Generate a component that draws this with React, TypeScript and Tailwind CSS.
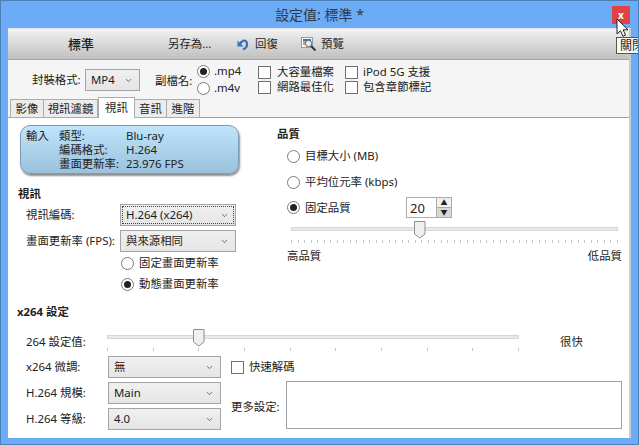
import type { ReactNode } from "react";
import { ChevronDown } from "lucide-react";

const cjk = "font-['Noto_Sans','Noto_Sans_CJK_TC',sans-serif]";

function Select({ value, w, h = "h-[22px]", focus = false, className = "" }: { value: string; w: string; h?: string; focus?: boolean; className?: string }) {
  return (
    <div className={`${w} ${h} ${className} relative flex shrink-0 items-center justify-between border border-[#a4a4a4] bg-gradient-to-b from-[#f0f0f0] to-[#e5e5e5] pl-[5px] pr-[6px] text-[#1c1c1c]`}>
      {focus && <div className="absolute inset-[1px] border border-dotted border-[#444]" />}
      <span>{value}</span>
      <ChevronDown size={9} strokeWidth={2} className="text-[#444]" />
    </div>
  );
}

function Radio({ checked = false }: { checked?: boolean }) {
  return (
    <span className="flex h-[13px] w-[13px] shrink-0 items-center justify-center rounded-full border border-[#7a7a7a] bg-white">
      {checked && <span className="h-[7px] w-[7px] rounded-full bg-[#222]" />}
    </span>
  );
}

function Check() {
  return <span className="block h-[13px] w-[13px] shrink-0 border border-[#707070] bg-white" />;
}

function Slider({ w, thumb, ticks }: { w: string; thumb: string; ticks: number }) {
  return (
    <div className={`${w} relative h-[24px]`}>
      <div className="absolute inset-x-0 top-[6px] h-[4px] border border-[#d6d6d6] bg-[#e7eae9]" />
      <svg className={`absolute top-0 ${thumb}`} width="12" height="18" viewBox="0 0 12 18">
        <path d="M.5.5h10.5v12.5l-5.25 4-5.25-4z" fill="#f0f0f0" stroke="#8e8f8f" />
      </svg>
      <div className="absolute inset-x-0 top-[19px] flex justify-between">
        {Array.from({ length: ticks }).map((_, i) => (
          <span key={i} className="block h-[3px] w-px bg-[#c4c4c4]" />
        ))}
      </div>
    </div>
  );
}

function Row({ children, className = "" }: { children: ReactNode; className?: string }) {
  return <div className={`flex items-center ${className}`}>{children}</div>;
}

export default function App() {
  const tabs = ["影像", "視訊濾鏡", "視訊", "音訊", "進階"];
  const widths = ["w-[34px]", "w-[55px]", "w-[37px]", "w-[33px]", "w-[34px]"];

  return (
    <div className={`${cjk} relative flex h-[445px] w-[639px] flex-col overflow-hidden border border-[#4a7fb8] bg-[#6cabf6] text-[11.4px] leading-[14px] text-[#222]`}>

      {/* title bar */}
      <div className="flex h-[27px] shrink-0 items-center justify-center pt-[1px] text-[14px] text-[#2f3a45]">
        設定值: 標準 *
      </div>

      {/* close button and tooltip */}
      <div className="absolute right-[8px] top-[5px] flex h-[18px] w-[18px] items-center justify-center bg-[#e04343] text-[10px] font-bold leading-none text-white">
        x
      </div>
      <div className="absolute left-[615px] top-[36px] z-10 h-[17px] w-[40px] border border-[#555] bg-[#fbfbf4] pl-[3px] pt-[1px] text-[12px] leading-[14px]">
        關閉
      </div>
      <svg className="absolute left-[615px] top-[17px] z-20" width="14" height="20" viewBox="0 0 14 20">
        <path d="M1 1v15l3.5-3.2 2.4 5.4 2.6-1.1-2.4-5.3H12z" fill="#fff" stroke="#222" />
      </svg>

      <div className="mx-[7px] flex min-h-0 flex-1 flex-col border-t border-[#dfe6ee] border-r-2 border-r-[#c8ccd0] bg-white">

        {/* toolbar */}
        <div className="flex h-[31px] shrink-0 items-center border-b border-[#a4a4a4] bg-gradient-to-b from-[#f2f2f2] to-[#c0c0c0] pl-[60px] text-[#1e1e1e]">
          <span className="w-[26px] text-[13px] font-medium">標準</span>
          <span className="ml-[74px] w-[69px]">另存為...</span>
          <svg width="12" height="13" viewBox="0 0 12 13">
            <path d="M3 6.5C3.5 3.8 9-.2 10 5.5c.4 3-2 5.2-4 6" fill="none" stroke="#2f71c9" strokeWidth="2.2" />
            <path d="M.5 2.5v6h6z" fill="#2f71c9" />
          </svg>
          <span className="ml-[6px] w-[46px]">回復</span>
          <svg width="16" height="16" viewBox="0 0 16 16">
            <rect x=".5" y="1.5" width="11" height="10" fill="#f5f8fc" stroke="#8aa0b8" />
            <rect x="2" y="3" width="8" height="2" fill="#3a78c8" />
            <rect x="2" y="5" width="3" height="4" fill="#e0a060" />
            <circle cx="7.5" cy="7.5" r="3.2" fill="#e6f0fa" stroke="#56616c" />
            <path d="M10 10l4.5 4.5" stroke="#333" strokeWidth="2" />
          </svg>
          <span className="ml-[4px]">預覽</span>
        </div>

        {/* container options */}
        <div className="relative flex h-[58px] shrink-0 items-start border-b border-[#9e9e9e] bg-[#f5f5f5] pl-[24px]">
          <Row className="mt-[9px]">
            <span className="w-[53px]">封裝格式:</span>
            <Select value="MP4" w="w-[55px]" />
          </Row>
          <Row className="ml-[15px] mt-[14px]">
            <span className="w-[42px]">副檔名:</span>
          </Row>
          <div className="mt-[4px] flex w-[45px] flex-col gap-[3px]">
            <Row className="gap-[4px]"><Radio checked /><span>.mp4</span></Row>
            <Row className="gap-[4px]"><Radio /><span>.m4v</span></Row>
          </div>
          <div className="ml-[16px] mt-[5px] flex flex-col gap-[1px]">
            <Row className="gap-[6px]"><Check /><span>大容量檔案</span></Row>
            <Row className="gap-[6px]"><Check /><span>網路最佳化</span></Row>
          </div>
          <div className="ml-[11px] mt-[5px] flex flex-col gap-[1px]">
            <Row className="gap-[5px]"><Check /><span>iPod 5G 支援</span></Row>
            <Row className="gap-[5px]"><Check /><span>包含章節標記</span></Row>
          </div>

          {/* tabs */}
          <div className="absolute bottom-[-2px] left-[2px] flex items-end">
            {tabs.map((t, i) => (
              <div
                key={t}
                className={`${widths[i]} flex items-center justify-center border border-[#acacac] ${i === 2 ? "z-10 h-[21px] border-b-0 bg-white" : "-ml-px h-[19px] bg-[#ececec] first:ml-0"} mb-[1px]`}
              >
                {t}
              </div>
            ))}
          </div>
        </div>

        {/* video and quality */}
        <div className="flex h-[187px] shrink-0">
          <div className="w-[269px] shrink-0 pl-[12px] pt-[7px]">
            <div className="grid h-[49px] w-[219px] grid-cols-[33px_67px_1fr] content-center rounded-[10px] border border-[#7f9db2] bg-gradient-to-b from-[#bfe4fb] to-[#9bc2dc] pl-[5px] shadow-[1px_2px_2px_rgba(0,0,0,0.45)]">
              <span>輸入</span><span>類型:</span><span>Blu-ray</span>
              <span /><span>編碼格式:</span><span>H.264</span>
              <span /><span>畫面更新率:</span><span>23.976 FPS</span>
            </div>
            <div className="-ml-[2px] mt-[13px] font-bold">視訊</div>
            <Row className="mt-[3px] pl-[6px]">
              <span className="w-[94px]">視訊編碼:</span>
              <Select value="H.264 (x264)" w="w-[116px]" focus />
            </Row>
            <Row className="mt-[4px] pl-[6px]">
              <span className="w-[94px]">畫面更新率 (FPS):</span>
              <Select value="與來源相同" w="w-[116px]" />
            </Row>
            <Row className="mt-[4px] gap-[5px] pl-[101px]"><Radio /><span>固定畫面更新率</span></Row>
            <Row className="mt-[7px] gap-[5px] pl-[101px]"><Radio checked /><span>動態畫面更新率</span></Row>
          </div>

          <div className="min-w-0 flex-1 pt-[9px]">
            <div className="font-bold">品質</div>
            <Row className="ml-[10px] mt-[8px] gap-[5px]"><Radio /><span>目標大小 (MB)</span></Row>
            <Row className="ml-[10px] mt-[12px] gap-[5px]"><Radio /><span>平均位元率 (kbps)</span></Row>
            <Row className="ml-[10px] mt-[8px] h-[21px]">
              <Radio checked />
              <span className="ml-[5px] w-[101px]">固定品質</span>
              <div className="flex h-[21px] w-[31px] items-center border border-[#acacac] bg-white pl-[3px] text-[13px]">20</div>
              <div className="flex h-[21px] w-[15px] flex-col border border-l-0 border-[#acacac]">
                <span className="flex flex-1 items-center justify-center border-b border-[#acacac] bg-[#f0f0f0] text-[7px] leading-none">▲</span>
                <span className="flex flex-1 items-center justify-center bg-[#d8d8d8] text-[7px] leading-none">▼</span>
              </div>
            </Row>
            <Slider w="ml-[14px] mt-[3px] w-[327px]" thumb="left-[123px]" ticks={51} />
            <div className="ml-[10px] mt-[4px] flex w-[335px] justify-between">
              <span>高品質</span>
              <span>低品質</span>
            </div>
          </div>
        </div>

        {/* x264 settings */}
        <div className="pl-[9px]">
          <div className="font-bold">x264 設定</div>
          <Row className="mt-[10px] items-start pl-[9px]">
            <span className="mt-[6px] w-[81px]">264 設定值:</span>
            <Slider w="w-[412px]" thumb="left-[86px]" ticks={10} />
            <span className="ml-[41px] mt-[6px]">很快</span>
          </Row>
          <div className="mt-[3px] flex pl-[9px]">
            <div className="flex flex-col gap-[4px]">
              <Row><span className="w-[82px]">x264 微調:</span><Select value="無" w="w-[113px]" /></Row>
              <Row><span className="w-[82px]">H.264 規模:</span><Select value="Main" w="w-[113px]" /></Row>
              <Row><span className="w-[82px]">H.264 等級:</span><Select value="4.0" w="w-[113px]" /></Row>
            </div>
            <div className="ml-[10px] flex flex-col">
              <Row className="mt-[4px] gap-[5px]"><Check /><span>快速解碼</span></Row>
              <Row className="mt-[7px] items-end">
                <span className="mb-[15px] w-[55px]">更多設定:</span>
                <div className="h-[48px] w-[336px] border border-[#a0a0a8] bg-white" />
              </Row>
            </div>
          </div>
        </div>
      </div>

      <div className="h-[6px] shrink-0" />
    </div>
  );
}
